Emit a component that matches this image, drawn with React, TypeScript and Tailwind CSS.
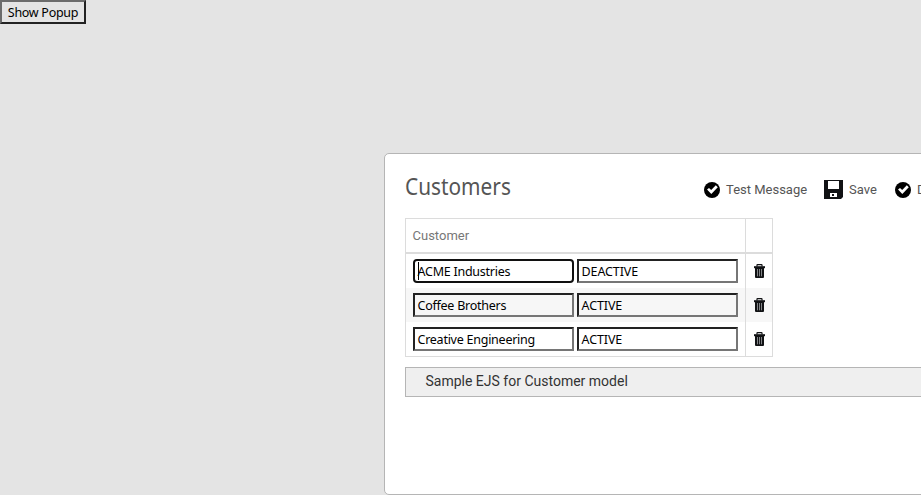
import React from 'react';

const humanist = "font-['Noto_Sans','Open_Sans',sans-serif]";

function CheckIcon() {
  return (
    <svg className="block h-4 w-4 shrink-0" viewBox="0 0 16 16">
      <circle cx="8" cy="8" r="8" fill="#000" />
      <path d="M3 7.6 L5 5.9 L7.2 7.9 L11.8 3.2 L13.8 5.2 L7.3 11.9 Z" fill="#fff" />
    </svg>
  );
}

function SaveIcon() {
  return (
    <svg className="block h-[19px] w-[19px] shrink-0" viewBox="0 0 19 19">
      <path d="M0 0H19V17L17 19H0Z" fill="#111214" />
      <rect x="4" y="1" width="11" height="8" fill="#fff" />
      <rect x="6" y="13" width="7" height="4" fill="#fff" />
      <rect x="8" y="14" width="2" height="2" fill="#111214" />
    </svg>
  );
}

function TrashIcon() {
  return (
    <svg className="block h-[14px] w-[11px]" viewBox="0 0 11 14">
      <path d="M3 2.5V1Q3 .6 3.5 .6H7.5Q8 .6 8 1V2.5" fill="none" stroke="#111214" strokeWidth="1.2" />
      <rect y="2.2" width="11" height="2" fill="#111214" />
      <path d="M1 4H10V13Q10 14 9 14H2Q1 14 1 13Z" fill="#111214" />
      <path d="M3.5 5V12.3M5.5 5V12.3M7.5 5V12.3" stroke="#a0a2a4" strokeWidth=".8" />
    </svg>
  );
}

function Field({ value, tight = false, focused = false }: { value: string; tight?: boolean; focused?: boolean }) {
  return (
    <div
      className={`flex h-6 w-[161px] items-center border-2 pl-[2.5px] text-[12.5px] leading-5 whitespace-nowrap text-black ${humanist} ${
        tight ? 'tracking-[-0.25px]' : 'tracking-[-0.1px]'
      } ${
        focused
          ? 'rounded-[4px] border-[#101010]'
          : 'border-t-[#222] border-r-[#767676] border-b-[#767676] border-l-[#222]'
      }`}
    >
      {focused && <span className="-mr-px h-[18px] w-px shrink-0 bg-black" />}
      <span className="-ml-px pt-0.5 pl-px leading-5">{value}</span>
    </div>
  );
}

const rows = [
  { name: 'ACME Industries', status: 'DEACTIVE' },
  { name: 'Coffee Brothers', status: 'ACTIVE' },
  { name: 'Creative Engineering', status: 'ACTIVE' },
];

function CustomerTable() {
  return (
    <div className="w-[368px] border border-[#dcdcdc]">
      <div className="flex h-[35px] border-b-2 border-[#dcdcdc]">
        <div className="w-[340px] border-r border-[#dcdcdc] pl-[6.5px] text-[13px] leading-[33px] text-[#777]">Customer</div>
      </div>
      {rows.map((row, i) => (
        <div key={row.name} className={`flex h-[34px] ${i % 2 === 1 ? 'bg-[#f7f7f7]' : 'bg-white'}`}>
          <div className="flex w-[340px] items-center gap-[3px] border-r border-[#dcdcdc] pl-[7px]">
            <Field value={row.name} tight focused={i === 0} />
            <Field value={row.status} />
          </div>
          <div className="flex flex-1 items-center pl-2"><TrashIcon /></div>
        </div>
      ))}
    </div>
  );
}

export default function App() {
  return (
    <div className="h-[495px] w-[921px] overflow-hidden bg-[#e4e4e4] font-[Roboto,sans-serif]">
      <button className={`block h-6 w-[86px] border-2 border-t-[#6b6b6b] border-r-[#222] border-b-[#222] border-l-[#6b6b6b] pt-px text-center text-[12.5px] leading-5 tracking-[-0.28px] whitespace-nowrap text-black ${humanist}`}>
        Show Popup
      </button>
      <div className="mt-[129px] ml-[384px] h-[342px] w-[600px] rounded-[5px] border border-[#b5b5b5] bg-white pl-5">
        <div className="flex h-16">
          <h1 className={`w-[299px] shrink-0 origin-left scale-x-[0.905] pt-[16px] text-[23px] leading-8 text-[#555] ${humanist}`}>Customers</h1>
          <div className="mt-[26px] flex h-[19px] items-center text-[13px] whitespace-nowrap text-[#555]">
            <CheckIcon />
            <span className="ml-1.5 w-[98px]">Test Message</span>
            <SaveIcon />
            <span className="ml-1.5 w-[46px]">Save</span>
            <CheckIcon />
            <span className="ml-1.5">D</span>
          </div>
        </div>
        <CustomerTable />
        <div className="mt-[10px] h-[30px] border border-[#b5b5b5] bg-[#efefef] pl-[19.5px] text-[14px] leading-[27px] text-[#333]">
          Sample EJS for Customer model
        </div>
      </div>
    </div>
  );
}
